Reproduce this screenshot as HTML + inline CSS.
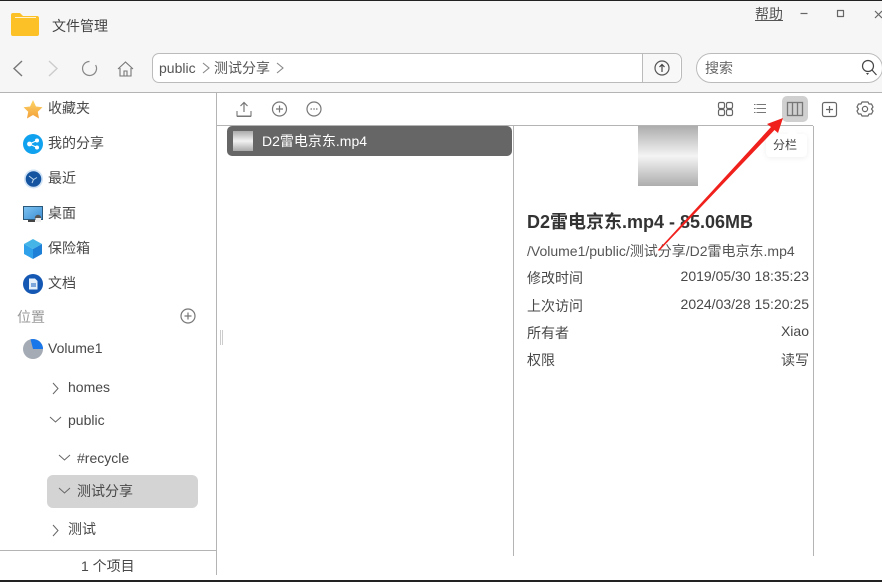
<!DOCTYPE html>
<html><head><meta charset="utf-8">
<style>
html,body{margin:0;padding:0;background:#fff}
#r{position:relative;width:882px;height:582px;overflow:hidden;background:#fff;font-family:"Liberation Sans","Noto Sans CJK SC",sans-serif;font-size:14px;color:#484848}
.t{position:absolute;white-space:nowrap;line-height:18px}
.b{position:absolute}
svg{position:absolute;overflow:visible}
.s{fill:none;stroke:#666;stroke-width:1.2;stroke-linejoin:round}
</style></head><body><div id="r">
<div class="b" style="left:0;top:0;width:882px;height:92px;background:#f6f6f6"></div>
<div class="b" style="left:0;top:0;width:882px;height:1px;background:#222"></div>
<div class="b" style="left:0;top:92px;width:882px;height:1px;background:#b4b4b4"></div>
<div class="b" style="left:217px;top:125px;width:596px;height:1px;background:#b4b4b4"></div>
<div class="b" style="left:216px;top:93px;width:1px;height:482px;background:#b4b4b4"></div>
<div class="b" style="left:513px;top:126px;width:1px;height:430px;background:#b4b4b4"></div>
<div class="b" style="left:813px;top:126px;width:1px;height:430px;background:#b4b4b4"></div>
<div class="b" style="left:0;top:550px;width:216px;height:1px;background:#b4b4b4"></div>
<div class="b" style="left:0;top:580px;width:882px;height:2px;background:#222"></div>
<div class="b" style="left:220px;top:330px;width:1px;height:15px;border-left:1px solid #ccc;border-right:1px solid #ccc"></div>

<!-- title -->
<svg style="left:11px;top:12px" width="28" height="25"><path d="M0 3Q0 1 2 1H9L12 4H26Q28 4 28 6V22Q28 24 26 24H2Q0 24 0 22Z" fill="#fdc128"/><path d="M4 5H25V6H4Z" fill="#fff3cf"/></svg>
<div class="t" style="left:52px;top:17px;color:#444">文件管理</div>
<div class="t" style="left:755px;top:5px;color:#555;text-decoration:underline">帮助</div>
<svg style="left:800px;top:8px" width="82" height="12"><path class="s" d="M0.5 5.5H7.5"/><rect class="s" x="37.5" y="2.5" width="6" height="6"/><path class="s" d="M75 3L82 10M82 3L75 10"/></svg>

<!-- nav -->
<svg style="left:12px;top:60px" width="130" height="18">
<path d="M10 1L2 8.500L10 16" fill="none" stroke="#777" stroke-width="1.4"/>
<path d="M37 1L45 8.500L37 16" fill="none" stroke="#ccc" stroke-width="1.4"/>
<path d="M83.600 5A7 7 0 1 1 77.500 1.500" fill="none" stroke="#888" stroke-width="1.2"/>
<path d="M106 9L113.500 2L121 9M108 8V16H119V8M112 16V11H115V16" fill="none" stroke="#777" stroke-width="1.1"/>
</svg>
<div class="b" style="left:152px;top:53px;width:528px;height:28px;border:1px solid #bbb;border-radius:7px;background:#fff"></div>
<div class="b" style="left:643px;top:54px;width:37px;height:28px;background:#f8f8f8;border-radius:0 6px 6px 0"></div>
<div class="b" style="left:642px;top:54px;width:1px;height:28px;background:#bbb"></div>
<div class="t" style="left:159px;top:59px;color:#555">public</div>
<svg style="left:200px;top:61px" width="90" height="15"><path d="M3 2L9 7L3 12" fill="none" stroke="#888" stroke-width="1.1"/><path d="M77 2L83 7L77 12" fill="none" stroke="#888" stroke-width="1.1"/></svg>
<div class="t" style="left:214px;top:59px;color:#555">测试分享</div>
<svg style="left:654px;top:60px" width="16" height="16"><circle cx="8" cy="8" r="7" fill="none" stroke="#555" stroke-width="1.2"/><path d="M8 12V5M5.500 7L8 4.500L10.500 7" fill="none" stroke="#444" stroke-width="1.2"/></svg>
<div class="b" style="left:696px;top:53px;width:185px;height:28px;border:1px solid #bbb;border-radius:15px;background:#fff"></div>
<div class="t" style="left:705px;top:59px;color:#666">搜索</div>
<svg style="left:861px;top:59px" width="17" height="18"><circle cx="7" cy="7" r="5.500" fill="none" stroke="#444" stroke-width="1.2"/><path d="M11 11L15.500 16" stroke="#444" stroke-width="1.2"/><path d="M5 14H8L6.500 16Z" fill="#444"/></svg>

<!-- sidebar icons -->
<svg style="left:23px;top:100px" width="20" height="19"><defs><linearGradient id="g1" x1="0" y1="0" x2="0" y2="1"><stop offset="0" stop-color="#fdd667"/><stop offset="1" stop-color="#f3a03a"/></linearGradient></defs><path d="M10 0L13 6.500L19.500 7.300L14.800 11.800L16 18.500L10 15L4 18.500L5.200 11.800L.5 7.300L7 6.500Z" fill="url(#g1)"/></svg>
<div class="t" style="left:48px;top:99px">收藏夹</div>
<svg style="left:23px;top:134px" width="20" height="20"><circle cx="10" cy="10" r="10" fill="#10a2ee"/><circle cx="14" cy="6.500" r="2" fill="#fff"/><circle cx="14" cy="13.500" r="2" fill="#fff"/><circle cx="6.500" cy="10" r="2.400" fill="#fff"/><path d="M14 6.500L6.500 10L14 13.500" fill="none" stroke="#fff"/></svg>
<div class="t" style="left:48px;top:134px">我的分享</div>
<svg style="left:24px;top:169px" width="19" height="20"><circle cx="9.500" cy="10" r="9.500" fill="#cfe2f5"/><circle cx="9.500" cy="10" r="7.800" fill="#14539f"/><path d="M5 7L9.500 10.500L13 8.500M9.500 10.500L8 14" fill="none" stroke="#bcd6ee" stroke-width="1"/></svg>
<div class="t" style="left:48px;top:169px">最近</div>
<svg style="left:23px;top:206px" width="20" height="16"><defs><linearGradient id="g2" x1="0" y1="0" x2="1" y2="1"><stop offset="0" stop-color="#7ec4f2"/><stop offset="1" stop-color="#3d8ed4"/></linearGradient></defs><rect x="0.500" y="0.500" width="19" height="13" fill="url(#g2)" stroke="#2b5778"/><path d="M5 15H12" stroke="#444" stroke-width="2"/><circle cx="15" cy="12" r="3.200" fill="#555"/><rect x="12.500" y="12" width="5.500" height="4" fill="#eee"/></svg>
<div class="t" style="left:48px;top:204px">桌面</div>
<svg style="left:24px;top:239px" width="18" height="20"><path d="M9 0L18 5L9 10L0 5Z" fill="#45b5e8"/><path d="M0 5L9 10V20L0 15Z" fill="#2fa0ea"/><path d="M18 5L9 10V20L18 15Z" fill="#1e7fd6"/></svg>
<div class="t" style="left:48px;top:239px">保险箱</div>
<svg style="left:23px;top:274px" width="20" height="20"><circle cx="10" cy="10" r="10" fill="#1458b4"/><path d="M6 4.500H12L14.500 7V15.500H6Z" fill="#e6f0fa"/><rect x="8" y="9" width="5" height="4" fill="#7ea8dc"/></svg>
<div class="t" style="left:48px;top:274px">文档</div>
<div class="t" style="left:17px;top:308px;color:#999">位置</div>
<svg style="left:180px;top:308px" width="16" height="16"><circle cx="8" cy="8" r="7" fill="none" stroke="#777" stroke-width="1.2"/><path d="M4.500 8H11.500M8 4.500V11.500" stroke="#777" stroke-width="1.2"/></svg>
<svg style="left:23px;top:339px" width="20" height="20"><circle cx="10" cy="10" r="10" fill="#a4abb4"/><path d="M10 10L7.500 0.300A10 10 0 0 1 20 10Z" fill="#1a77ea"/></svg>
<div class="t" style="left:48px;top:339px">Volume1</div>

<!-- tree -->
<svg style="left:48px;top:380px" width="30" height="160">
<path d="M5 3L10 8.500L5 14" fill="none" stroke="#666"/>
<path d="M2 37L7.500 42L13 37" fill="none" stroke="#666"/>
<path d="M11 75L16.500 80L22 75" fill="none" stroke="#666"/>
</svg>
<div class="b" style="left:47px;top:475px;width:151px;height:33px;background:#d4d4d4;border-radius:6px"></div>
<svg style="left:48px;top:484px" width="30" height="60">
<path d="M11 4L16.500 9L22 4" fill="none" stroke="#666"/>
<path d="M5 41L10 46.500L5 52" fill="none" stroke="#666"/>
</svg>
<div class="t" style="left:68px;top:378px">homes</div>
<div class="t" style="left:68px;top:411px">public</div>
<div class="t" style="left:77px;top:449px">#recycle</div>
<div class="t" style="left:77px;top:482px">测试分享</div>
<div class="t" style="left:68px;top:520px">测试</div>
<div class="t" style="left:81px;top:557px">1 个项目</div>

<!-- toolbar -->
<svg style="left:236px;top:101px" width="90" height="17">
<path d="M8 11V2M4.500 5L8 1.500L11.500 5" fill="none" stroke="#777" stroke-width="1.2"/><path d="M1 10V15H15V10M1 15.500H15" fill="none" stroke="#777" stroke-width="1.1"/>
<circle cx="43.500" cy="8" r="7" fill="none" stroke="#777" stroke-width="1.2"/><path d="M40 8H47M43.500 4.500V11.500" stroke="#777" stroke-width="1.2"/>
<circle cx="78" cy="8" r="7" fill="none" stroke="#777" stroke-width="1.2"/><path d="M74.500 8H76M77.300 8H78.800M80 8H81.500" stroke="#777" stroke-width="1.2"/>
</svg>
<div class="b" style="left:782px;top:96px;width:26px;height:26px;background:#d0d0d0;border-radius:5px"></div>
<svg style="left:718px;top:100px" width="160" height="19">
<rect x="0.500" y="2.500" width="6" height="6" rx="1.500" class="s"/><rect x="8.500" y="2.500" width="6" height="6" rx="1.500" class="s"/><rect x="0.500" y="9.500" width="6" height="6" rx="1.500" class="s"/><rect x="8.500" y="9.500" width="6" height="6" rx="1.500" class="s"/>
<path d="M36 4.500H48M36 8.500H48M36 12.500H48" stroke="#777" stroke-dasharray="1.500 1 10 0"/>
<rect x="69.500" y="2.500" width="15" height="13" fill="none" stroke="#777" stroke-width="1.300"/><path d="M74.500 3V15M79.500 3V15" stroke="#777" stroke-width="1.300"/>
<rect x="104.500" y="2.500" width="14" height="14" rx="2" class="s"/><path d="M108 9.500H115M111.500 6V13" stroke="#666" stroke-width="1.200"/>
<path d="M144 2H150L151 4H153.500L155 7L153.500 9L155 11L153.500 14H151L150 16H144L143 14H140.500L139 11L140.500 9L139 7L140.500 4H143Z" class="s"/><circle cx="147" cy="9" r="2.600" class="s"/>
</svg>

<!-- file row -->
<div class="b" style="left:227px;top:126px;width:285px;height:30px;background:#666;border-radius:5px"></div>
<div class="b" style="left:233px;top:131px;width:20px;height:20px;background:linear-gradient(#aaa,#f2f2f2 50%,#aaa)"></div>
<div class="t" style="left:262px;top:132px;color:#fff">D2雷电京东.mp4</div>

<!-- details -->
<div class="b" style="left:638px;top:126px;width:60px;height:60px;background:linear-gradient(#adadad,#f4f4f4 50%,#adadad)"></div>
<div class="t" style="left:527px;top:212px;font-size:18px;font-weight:bold;line-height:20px;color:#333">D2雷电京东.mp4 - 85.06MB</div>
<div class="t" style="left:527px;top:242px;color:#555">/Volume1/public/测试分享/D2雷电京东.mp4</div>
<div class="t" style="left:527px;top:269px">修改时间</div>
<div class="t" style="right:73px;top:267px">2019/05/30 18:35:23</div>
<div class="t" style="left:527px;top:297px">上次访问</div>
<div class="t" style="right:73px;top:295px">2024/03/28 15:20:25</div>
<div class="t" style="left:527px;top:324px">所有者</div>
<div class="t" style="right:73px;top:322px">Xiao</div>
<div class="t" style="left:527px;top:351px">权限</div>
<div class="t" style="right:73px;top:351px">读写</div>

<!-- tooltip -->
<div class="b" style="left:766px;top:134px;width:41px;height:23px;background:#fff;border-radius:4px;box-shadow:0 1px 6px rgba(0,0,0,.07)"></div>
<div class="b" style="left:789px;top:130px;width:7px;height:7px;background:#fff;transform:rotate(45deg)"></div>
<div class="t" style="left:773px;top:136px;font-size:12px;color:#444">分栏</div>

<!-- arrow -->
<svg style="left:0;top:0" width="882" height="582"><path d="M658 250L771 127L767 124L783 118L778 133L774.500 130L659 251Z" fill="#f0201c"/></svg>
</div></body></html>
